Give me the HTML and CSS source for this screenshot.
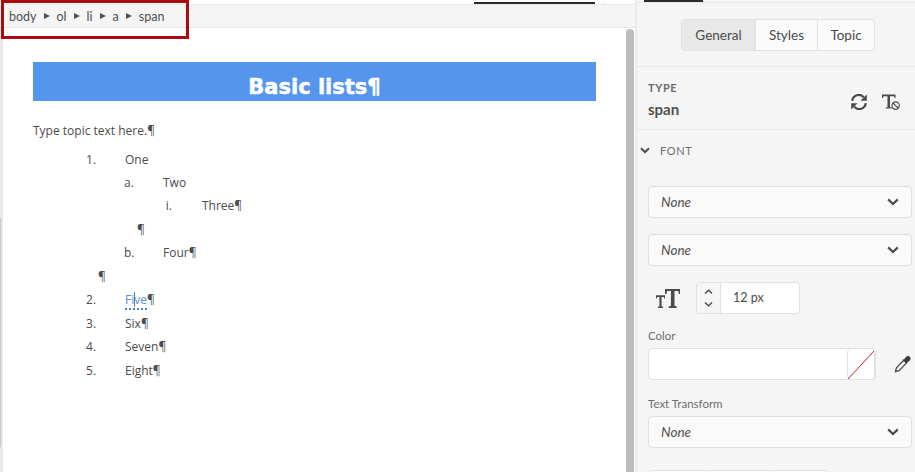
FILE: index.html
```html
<!DOCTYPE html>
<html lang="en">
<head>
    <meta charset="UTF-8">
    <title>Basic lists</title>
    <link rel="stylesheet" href="styles.css">
</head>
<body>
<div class="app">
    <div class="editor">
        <div class="editor-top"><div class="editor-tab-line"></div><div class="editor-tab-stub"></div></div>
        <div class="crumbs">
            <span>body</span><i class="sep"></i>
            <span>ol</span><i class="sep"></i>
            <span>li</span><i class="sep"></i>
            <span>a</span><i class="sep"></i>
            <span>span</span>
        </div>
        <div class="doc-wrap">
            <div class="doc">
                <h1 class="doc-title">Basic lists¶</h1>
                <p class="doc-text">Type topic text here.¶</p>
                <ol class="list-a">
                    <li>One
                        <ol class="list-b">
                            <li>Two
                                <ol class="list-c">
                                    <li>Three¶</li>
                                </ol>
                                <div class="mark mark-b">¶</div>
                            </li>
                            <li>Four¶</li>
                        </ol>
                        <div class="mark mark-a">¶</div>
                    </li>
                    <li><span class="link">Fi<span class="caret"></span>ve</span>¶</li>
                    <li>Six¶</li>
                    <li>Seven¶</li>
                    <li>Eight¶</li>
                </ol>
            </div>
            <div class="scroll"><div class="scroll-thumb"></div></div>
        </div>
        <div class="crumb-box"></div>
        <div class="splitter"></div>
    </div>

    <div class="panel">
        <div class="panel-top"><div class="panel-tab-line"></div></div>
        <div class="tabs-row">
            <div class="tabs">
                <div class="tab on tab-general">General</div>
                <div class="tab tab-styles">Styles</div>
                <div class="tab tab-topic">Topic</div>
            </div>
        </div>
        <div class="type-row">
            <div>
                <div class="type-label">TYPE</div>
                <div class="type-name">span</div>
            </div>
            <div class="type-icons">
                <svg width="16" height="16" viewBox="0 0 16 16"><path d="M1.200 6.800A6.600 6.600 0 0 1 12.700 3.200" fill="none" stroke="#4b4b4b" stroke-width="2.200"/><path d="M15.800 .4v6.400H9.400z" fill="#4b4b4b"/><path d="M14.800 9.200A6.600 6.600 0 0 1 3.300 12.800" fill="none" stroke="#4b4b4b" stroke-width="2.200"/><path d="M.2 15.600V9.200h6.400z" fill="#4b4b4b"/></svg>
                <svg width="18" height="16" viewBox="0 0 18 16"><path d="M0 .5h13.500v3.400h-1L12 2.300H8v10.900l1.800.4v1H3.700v-1l1.800-.4V2.300H1.500L1 3.900H0z" fill="#4b4b4b"/><circle cx="13.600" cy="11.600" r="3.700" fill="#f5f5f5" stroke="#4b4b4b" stroke-width="1.200"/><path d="M11 9l5.200 5.200" stroke="#4b4b4b" stroke-width="1.200"/></svg>
            </div>
        </div>
        <div class="section-head">
            <svg class="chev" width="10" height="7" viewBox="0 0 10 7"><path d="M1 1.200l4 4 4-4" fill="none" stroke="#4b4b4b" stroke-width="2"/></svg>
            <span>FONT</span>
        </div>
        <div class="fields">
            <div class="select"><em>None</em><svg width="12" height="8" viewBox="0 0 12 8"><path d="M1.200 1.400L6 6l4.800-4.600" fill="none" stroke="#4b4b4b" stroke-width="2.200"/></svg></div>
            <div class="select"><em>None</em><svg width="12" height="8" viewBox="0 0 12 8"><path d="M1.200 1.400L6 6l4.800-4.600" fill="none" stroke="#4b4b4b" stroke-width="2.200"/></svg></div>
            <div class="size-row">
                <svg width="24" height="19" viewBox="0 0 24 19"><path d="M0 6.300h9v3.300h-.8L7.700 8H5.600v9.400l1.500.4V19H1.900v-1.200l1.500-.4V8H1.300L.8 9.600H0z" fill="#4b4b4b"/><path d="M9 0h15v5h-1l-.8-2.900h-3.700v14.700l2.200.7V19h-8v-1.500l2.200-.7V2.100H11.200L10.400 5H9z" fill="#4b4b4b"/></svg>
                <div class="stepper">
                    <div class="step-btns">
                        <svg width="9" height="6" viewBox="0 0 9 6"><path d="M1 4.600l3.500-3.300 3.500 3.300" fill="none" stroke="#4b4b4b" stroke-width="1.400"/></svg>
                        <svg width="9" height="6" viewBox="0 0 9 6"><path d="M1 1.400l3.500 3.300 3.500-3.300" fill="none" stroke="#4b4b4b" stroke-width="1.400"/></svg>
                    </div>
                    <div class="step-val">12 px</div>
                </div>
            </div>
            <div class="field-label label-color">Color</div>
            <div class="color-row">
                <div class="color-input">
                    <div class="swatch"><svg width="26" height="30" viewBox="0 0 26 30"><path d="M0 30L26 2" stroke="#d7191c" stroke-width="1"/></svg></div>
                </div>
                <svg width="18" height="18" viewBox="0 0 18 18"><path d="M9.800 5.200l-7.400 7.700-.9 3.600 3.600-.9 7.400-7.700" fill="#f5f5f5" stroke="#4b4b4b" stroke-width="1.300"/><path d="M8.400 4.800l1.800-.6 1.900-2.500c1-1 2.800-1 3.800.1s.9 2.700-.1 3.700l-2.400 1.800-.6 1.900z" fill="#3c3c3c"/></svg>
            </div>
            <div class="field-label label-transform">Text Transform</div>
            <div class="select select-last"><em>None</em><svg width="12" height="8" viewBox="0 0 12 8"><path d="M1.200 1.400L6 6l4.800-4.600" fill="none" stroke="#4b4b4b" stroke-width="2.200"/></svg></div>
            <div class="btn-stub"><div></div><div></div><div></div></div>
        </div>
    </div>
</div>
</body>
</html>
```

FILE: styles.css
```css
* {
    box-sizing: border-box;
}

html, body {
    margin: 0;
    height: 100%;
    overflow: hidden;
}

body {
    font-family: "Open Sans", "Noto Sans", sans-serif;
    font-size: 12px;
    color: #4b4b4b;
    background: #fff;
}

.app {
    display: flex;
    width: 915px;
    height: 472px;
    overflow: hidden;
}

/* left side */
.editor {
    position: relative;
    width: 635px;
    flex: none;
    display: flex;
    flex-direction: column;
}

.editor-top {
    display: flex;
    height: 5px;
    padding-top: 2px;
    border-bottom: 1px solid #e8e8e8;
}

.editor-tab-line {
    width: 121px;
    height: 2px;
    margin-left: 474px;
    background: #2c2c2c;
}

.editor-tab-stub {
    height: 2px;
    margin-left: 9px;
    border-left: 1px solid #e8e8e8;
}

.crumbs {
    height: 23px;
    flex: none;
    display: flex;
    align-items: center;
    padding-left: 9px;
    background: #f5f5f5;
    border-bottom: 1px solid #e8e8e8;
    font-family: Lato, "Open Sans", sans-serif;
    font-size: 12.500px;
    color: #505050;
}

.sep {
    width: 0;
    height: 0;
    margin: 0 7px 0 7px;
    border-left: 6px solid #505050;
    border-top: 3px solid transparent;
    border-bottom: 3px solid transparent;
}

.crumb-box {
    position: absolute;
    left: 1px;
    top: 0;
    width: 188px;
    height: 39px;
    border: 3px solid #a80c0c;
}

.splitter {
    position: absolute;
    left: 0;
    top: 218px;
    width: 1px;
    height: 229px;
    background: #c8c8c8;
}

.doc-wrap {
    flex: 1;
    display: flex;
    min-height: 0;
    border-left: 3px solid #e8e8e8;
}

.doc {
    flex: 1;
    padding: 34px 29px 0 30px;
    overflow: hidden;
}

.doc-title {
    margin: 0;
    height: 39px;
    background: #5595ee;
    color: #fff;
    font-family: "DejaVu Sans", Verdana, sans-serif;
    font-size: 21px;
    font-weight: 700;
    line-height: 51px;
    text-align: center;
    -webkit-text-stroke: .5px #fff;
}

.doc-text {
    margin: 22px 0 0;
    line-height: 16px;
}

.list-a, .list-b, .list-c {
    margin: 0;
    list-style: none;
    counter-reset: item;
}

.list-a {
    margin-top: 8.600px;
    padding-left: 92px;
}

.list-b {
    padding-left: 38px;
}

.list-c {
    padding-left: 39px;
}

.doc li {
    counter-increment: item;
    line-height: 23.440px;
}

/* markers sit right aligned, a fixed gap before the text */
.doc li::before {
    box-sizing: border-box;
    display: inline-block;
    width: 39px;
    margin-left: -39px;
    text-align: right;
}

.list-a > li::before {
    content: counter(item, decimal) ".";
    padding-right: 32px;
}

.list-b > li::before {
    content: counter(item, lower-alpha) ".";
    padding-right: 30px;
}

.list-c > li::before {
    content: counter(item, lower-roman) ".";
    padding-right: 30px;
}

.mark {
    line-height: 23.440px;
}

.mark-a {
    margin-left: -27px;
}

.mark-b {
    margin-left: -26px;
}

.link {
    color: #5a8fd0;
    border-bottom: 2px dotted #4d7fc0;
}

.caret {
    display: inline-block;
    width: 1px;
    height: 15px;
    margin: 0 -.5px -3px;
    background: #4d7fc0;
}

.scroll {
    width: 10px;
    flex: none;
    padding: 1px 1px 0;
    background: #fff;
}

.scroll-thumb {
    height: 100%;
    width: 8px;
    background: #bcbcbc;
    border-radius: 4px 4px 0 0;
}

/* right side */
.panel {
    flex: 1;
    background: #f5f5f5;
    border-left: 2px solid #ebebeb;
    font-family: Lato, "Open Sans", sans-serif;
}

.panel-top {
    height: 3px;
    border-bottom: 1px solid #e8e8e8;
    margin-left: -2px;
}

.panel-tab-line {
    width: 59px;
    height: 2px;
    margin-left: 9px;
    background: #2c2c2c;
}

.tabs-row {
    height: 64px;
    padding: 16px 0 0 44px;
    border-bottom: 1px solid #e8e8e8;
}

.tabs {
    display: flex;
    width: 194px;
    height: 32px;
    background: #fafafa;
    border: 1px solid #e1e1e1;
    border-radius: 4px;
    overflow: hidden;
    font-size: 13.500px;
}

.tab {
    display: flex;
    align-items: center;
    justify-content: center;
    border-left: 1px solid #e1e1e1;
}

.tab-general { width: 73px; border-left: 0; }
.tab-styles { width: 62px; }
.tab-topic { flex: 1; }

.tab.on {
    background: #e8e8e8;
}

.type-row {
    height: 63px;
    display: flex;
    justify-content: space-between;
    padding: 14px 16px 0 11px;
    border-bottom: 1px solid #e8e8e8;
}

.type-label {
    font-size: 11px;
    font-weight: 700;
    letter-spacing: .6px;
    color: #6e6e6e;
    line-height: 14px;
}

.type-name {
    margin-top: 3px;
    font-size: 15px;
    font-weight: 700;
    line-height: 22px;
    color: #505050;
}

.type-icons {
    display: flex;
    gap: 15px;
    height: 16px;
    margin-top: 13px;
}

.section-head {
    display: flex;
    align-items: center;
    gap: 10px;
    height: 22px;
    margin-top: 9px;
    padding-left: 3px;
    font-size: 11px;
    letter-spacing: .6px;
    color: #6e6e6e;
}

.fields {
    padding: 25px 4px 0 11px;
}

.select {
    display: flex;
    align-items: center;
    justify-content: space-between;
    height: 32px;
    padding: 0 12px 1px 12px;
    margin-bottom: 16px;
    background: #fafafa;
    border: 1px solid #e1e1e1;
    border-radius: 4px;
    font-size: 13.500px;
}

.select em {
    color: #505050;
}

.select svg {
    margin-top: 1px;
}

.select-last {
    margin-bottom: 22px;
}

.size-row {
    display: flex;
    align-items: center;
    gap: 16px;
    padding-left: 8px;
}

.stepper {
    display: flex;
    width: 104px;
    height: 32px;
    background: #fff;
    border: 1px solid #e1e1e1;
    border-radius: 4px;
    overflow: hidden;
    font-size: 12.500px;
}

.step-btns {
    width: 24px;
    display: flex;
    flex-direction: column;
    align-items: center;
    justify-content: center;
    gap: 6px;
    background: #f5f5f5;
    border-right: 1px solid #e1e1e1;
}

.step-val {
    padding-left: 12px;
    line-height: 30px;
}

.field-label {
    line-height: 16px;
    font-size: 11.500px;
    color: #6e6e6e;
}

.label-color {
    margin-top: 14px;
    margin-bottom: 4px;
}

.label-transform {
    margin-top: 16px;
    margin-bottom: 4px;
}

.color-row {
    display: flex;
    align-items: center;
    gap: 18px;
}

.color-input {
    width: 228px;
    height: 32px;
    display: flex;
    justify-content: flex-end;
    background: #fff;
    border: 1px solid #e1e1e1;
    border-radius: 4px;
    overflow: hidden;
}

.swatch {
    width: 28px;
    height: 30px;
    border-left: 1px solid #e1e1e1;
    border-right: 1px solid #e1e1e1;
    border-radius: 4px;
}

.swatch svg {
    display: block;
}

.btn-stub {
    display: flex;
    width: 181px;
    height: 20px;
    margin-left: 1px;
    border: 1px solid #e1e1e1;
    border-radius: 4px;
    background: #fafafa;
}

.btn-stub div {
    flex: 1;
    border-right: 1px solid #e1e1e1;
}

.btn-stub div:last-child {
    border-right: 0;
}
```
